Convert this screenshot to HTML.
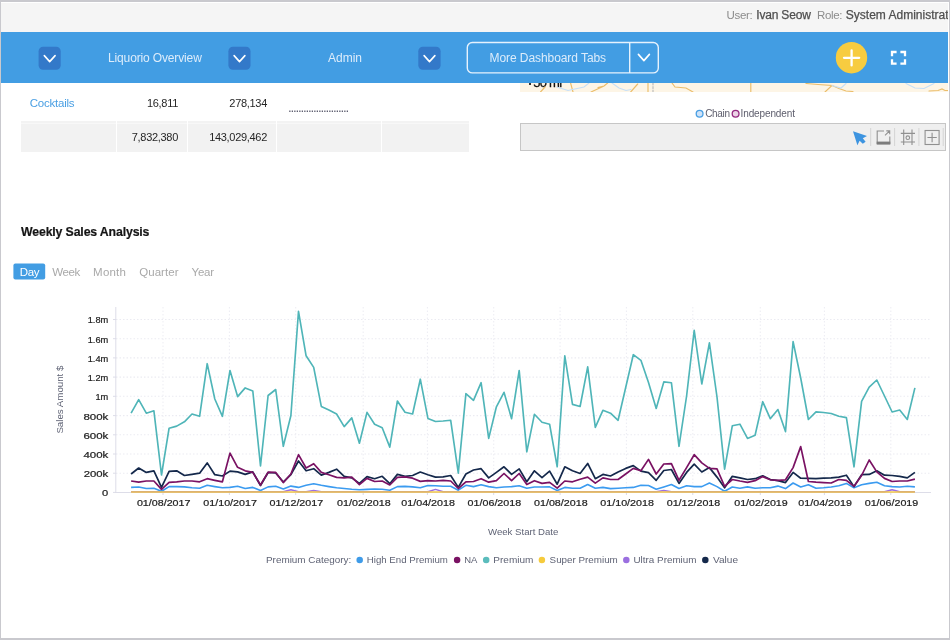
<!DOCTYPE html>
<html>
<head>
<meta charset="utf-8">
<title>Dashboard</title>
<style>
*{box-sizing:border-box;margin:0;padding:0}
html,body{width:950px;height:640px;overflow:hidden;background:#fff}
body{font-family:"Liberation Sans",sans-serif;position:relative;color:#333}
.abs{position:absolute;white-space:nowrap}
#frame{position:absolute;left:0;top:0;width:950px;height:640px;border-style:solid;border-color:#c9c9ce;border-width:2px 1px 2px 1px;pointer-events:none;z-index:50}
#topstrip{position:absolute;left:1px;top:3px;width:947px;height:29px;background:#f5f5f5;overflow:hidden}
#bluebar{position:absolute;left:1px;top:32px;width:947px;height:51px;background:#429de3}
.dd{position:absolute;top:46px;width:23px;height:24px;background:#3278c9;border-radius:4px}
.dd svg,.mbtn svg{position:absolute;left:0;top:0}
.navt{position:absolute;white-space:nowrap;color:#dcecfb;font-size:12px;line-height:14px;top:51px}
.mbtn{position:absolute;left:467px;top:42px;width:192px;height:32px;border:1px solid #e3f0fc;border-radius:5px}
.num{position:absolute;white-space:nowrap;font-size:11px;letter-spacing:-0.3px;line-height:14px;color:#262626;text-align:right}
.tab{position:absolute;white-space:nowrap;font-size:11.5px;line-height:14px;top:264.8px;color:#a9a9a9}
.ut{top:5px;font-size:12px;line-height:14px}
.cell{position:absolute;top:121px;height:31px;background:linear-gradient(#f3f3f3 0,#f3f3f3 2px,#f8f8f8 2px,#f8f8f8 3px,#f2f2f2 3px)}
</style>
</head>
<body>
<div id="wrap" style="position:absolute;left:0;top:0;width:950px;height:640px;will-change:transform">
<div id="topstrip">
  <div class="abs ut" id="u1" style="left:725.5px;color:#8c8c8c;font-size:11.5px;letter-spacing:-0.3px">User:</div>
  <div class="abs ut" id="u2" style="left:755.3px;color:#4f4f4f;letter-spacing:-0.19px;-webkit-text-stroke:0.25px #4f4f4f">Ivan Seow</div>
  <div class="abs ut" id="u3" style="left:816.1px;color:#8c8c8c;font-size:11.5px;letter-spacing:-0.35px">Role:</div>
  <div class="abs ut" id="u4" style="left:844.8px;color:#4f4f4f;-webkit-text-stroke:0.25px #4f4f4f">System Administrator</div>
</div>
<div id="bluebar"></div>

<!-- nav -->
<svg class="abs" style="left:0;top:32px" width="950" height="51" viewBox="0 32 950 51">
  <g fill="#3379c9">
    <rect x="38.6" y="46.7" width="22.1" height="23.1" rx="4.5"/>
    <rect x="228.4" y="46.7" width="22.1" height="23.1" rx="4.5"/>
    <rect x="418.3" y="46.7" width="22.3" height="23.1" rx="4.5"/>
  </g>
  <g fill="none" stroke="#fff" stroke-width="1.6" stroke-linecap="round" stroke-linejoin="round">
    <path d="M44.3 55.6 L49.7 61.6 L55.1 55.6"/>
    <path d="M234.1 55.6 L239.5 61.6 L244.9 55.6"/>
    <path d="M424.1 55.6 L429.5 61.6 L434.9 55.6"/>
    <path d="M638.4 54.4 L643.9 60.6 L649.4 54.4"/>
  </g>
  <rect x="467.3" y="42.5" width="191" height="30.4" rx="5" fill="none" stroke="#e6f2fd" stroke-width="1.4"/>
  <line x1="629.7" y1="42.5" x2="629.7" y2="72.9" stroke="#e6f2fd" stroke-width="1.4"/>
  <circle cx="851.5" cy="57.7" r="15.7" fill="#f7cc40"/>
  <path d="M844 57.8 H859.2 M851.6 50.3 V65.4" stroke="#fff" stroke-width="2.3" stroke-linecap="round" fill="none"/>
  <path d="M892 56.3 V52 H896.6 M900.4 52 H905 V56.3 M905 59.3 V63.6 H900.4 M896.6 63.6 H892 V59.3" fill="none" stroke="#fff" stroke-width="2.3"/>
</svg>
<div class="navt" id="t1" style="left:108px;letter-spacing:-0.14px">Liquorio Overview</div>
<div class="navt" id="t2" style="left:328px">Admin</div>
<div class="navt" id="t3" style="left:489.5px;letter-spacing:-0.07px">More Dashboard Tabs</div>

<!-- table -->
<div class="abs" id="ck" style="left:29.7px;top:96px;font-size:11.5px;letter-spacing:-0.22px;line-height:14px;color:#4a9fe3">Cocktails</div>
<div class="num" id="n1" style="left:100px;width:78px;top:96px">16,811</div>
<div class="num" id="n2" style="left:180px;width:87px;top:96px">278,134</div>
<svg class="abs" style="left:288px;top:108px" width="64" height="6" viewBox="288 108 64 6"><line x1="289.2" y1="111.2" x2="349" y2="111.2" stroke="#5f5f70" stroke-width="1.6" stroke-dasharray="1.3 1.2"/></svg>
<div class="cell" style="left:21px;width:95px"></div>
<div class="cell" style="left:117px;width:70px"></div>
<div class="cell" style="left:188px;width:88px"></div>
<div class="cell" style="left:277px;width:104px"></div>
<div class="cell" style="left:382px;width:87px"></div>
<div class="num" id="n3" style="left:100px;width:78px;top:130px">7,832,380</div>
<div class="num" id="n4" style="left:180px;width:87px;top:130px">143,029,462</div>

<!-- map strip + toolbar -->
<div class="abs" style="left:520px;top:83px;width:428px;height:9px;background:#fdf5e6;overflow:hidden">
  <div class="abs" style="left:13.3px;top:-6.6px;font-size:13px;line-height:14px;color:#111;-webkit-text-stroke:0.3px #111;letter-spacing:-0.75px">50 mi</div><div class="abs" style="left:8.5px;top:0;width:2px;height:1.5px;background:#333"></div>
  <svg class="abs" style="left:0;top:0" width="428" height="9" viewBox="520 83 428 9" fill="none" stroke-width="1.15" stroke-linecap="round">
    <g stroke="#ebbd6a">
      <path d="M540.5 92 L545 87 M570.6 83 L573 92 M591 92 L604 86 L607.6 83 M604 86 L598 87.5 M630.7 92 L637.7 84 M648 83 V92 M672 83 L675 87 L686 88 L693 92"/>
      <path d="M750.8 83 V92 M806 83.5 L818 84.5 L832 85.5 L825 92 M832 85.5 L839 88.5 L846 91 L853 91.5 M929 91 L938 90.5 L942 89 L945 90.5 L949 90.5"/>
    </g>
    <g stroke="#c6dff6">
      <path d="M556.7 87 L568 90.5 L584 87 L589 83 M612 83 L619 88 L626 90.5 L631 89.5"/>
      <path d="M846 83.5 L841 88 L832 85.5 M906 83.5 L915 88 L924 88.5 L934 83.5"/>
    </g>
    <path d="M653 83 V92" stroke="#bbb" stroke-dasharray="2 1.5"/>
  </svg>
</div>
<svg class="abs" style="left:690px;top:106px" width="120" height="16" viewBox="690 106 120 16">
  <circle cx="699.6" cy="113.8" r="3.4" fill="#cfe3f8" stroke="#4a9fe3" stroke-width="1.3"/>
  <circle cx="735.6" cy="113.8" r="3.4" fill="#ecd3e6" stroke="#952a80" stroke-width="1.3"/>
</svg>
<div class="abs" id="lg1" style="left:705.2px;top:106.5px;font-size:10px;line-height:14px;color:#5d5d6c;letter-spacing:-0.33px">Chain</div>
<div class="abs" id="lg2" style="left:740.6px;top:106.5px;font-size:10px;line-height:14px;color:#5d5d6c;letter-spacing:-0.13px">Independent</div>
<div class="abs" style="left:520px;top:123px;width:426px;height:28px;background:#efefef;border:1px solid #c6c6c6"></div>
<svg class="abs" style="left:845px;top:124px" width="100" height="26" viewBox="845 124 100 26" fill="none">
  <path d="M853 131.3 L867 136 L862.8 138.3 L865.6 141.8 L862.8 143.8 L859.6 140.8 L857.4 145.2 Z" fill="#3d94e0"/>
  <g stroke="#d4d4d4" stroke-width="1"><path d="M870.7 128 V146 M894.6 128 V146 M918.9 128 V146 M943.2 128 V146"/></g>
  <g stroke="#909090" stroke-width="1.1">
    <path d="M884 131 H877.2 V144 M889.8 136.5 V144"/>
    <path d="M885 135.4 L889.6 130.9 M886.3 130.9 H889.7 V134.3"/>
    <path d="M903.7 129.6 V145 M912 129.6 V145 M900.8 133.4 H915 M900.8 142 H915"/>
    <circle cx="907.8" cy="137.7" r="1.8"/>
    <rect x="925.1" y="130.5" width="14" height="14"/>
    <path d="M927.4 137.5 H936.8 M932.1 132.8 V142.2"/>
  </g>
  <rect x="876.7" y="141.6" width="13.6" height="3" fill="#7c7c7c"/>
</svg>

<!-- title & tabs -->
<div class="abs" id="title" style="left:21px;top:224.5px;font-size:12.3px;letter-spacing:-0.14px;line-height:15px;font-weight:bold;color:#151515;-webkit-text-stroke:0.2px #151515">Weekly Sales Analysis</div>
<svg class="abs" style="left:12px;top:262px" width="36" height="20" viewBox="12 262 36 20"><rect x="13.4" y="263.4" width="31.8" height="16.1" rx="2" fill="#429de3"/></svg>
<div class="tab" id="tb0" style="left:19.8px;color:#fff;letter-spacing:-0.35px">Day</div>
<div class="tab" id="tb1" style="left:52.2px;letter-spacing:-0.35px">Week</div>
<div class="tab" id="tb2" style="left:93.1px;letter-spacing:0.22px">Month</div>
<div class="tab" id="tb3" style="left:139.3px;letter-spacing:0.03px">Quarter</div>
<div class="tab" id="tb4" style="left:191.5px;letter-spacing:-0.2px">Year</div>

<!-- chart -->
<svg id="chart" class="abs" style="left:0;top:290px;font-family:'Liberation Sans',sans-serif" width="950" height="300" viewBox="0 290 950 300">
<!--CHART-START-->
<line x1="116" y1="473.2" x2="929.5" y2="473.2" stroke="#ebebf2" stroke-width="1.1" stroke-dasharray="1.5 2"/>
<line x1="116" y1="454.0" x2="929.5" y2="454.0" stroke="#ebebf2" stroke-width="1.1" stroke-dasharray="1.5 2"/>
<line x1="116" y1="434.8" x2="929.5" y2="434.8" stroke="#ebebf2" stroke-width="1.1" stroke-dasharray="1.5 2"/>
<line x1="116" y1="415.6" x2="929.5" y2="415.6" stroke="#ebebf2" stroke-width="1.1" stroke-dasharray="1.5 2"/>
<line x1="116" y1="396.3" x2="929.5" y2="396.3" stroke="#ebebf2" stroke-width="1.1" stroke-dasharray="1.5 2"/>
<line x1="116" y1="377.1" x2="929.5" y2="377.1" stroke="#ebebf2" stroke-width="1.1" stroke-dasharray="1.5 2"/>
<line x1="116" y1="357.9" x2="929.5" y2="357.9" stroke="#ebebf2" stroke-width="1.1" stroke-dasharray="1.5 2"/>
<line x1="116" y1="338.7" x2="929.5" y2="338.7" stroke="#ebebf2" stroke-width="1.1" stroke-dasharray="1.5 2"/>
<line x1="116" y1="319.5" x2="929.5" y2="319.5" stroke="#ebebf2" stroke-width="1.1" stroke-dasharray="1.5 2"/>
<line x1="163.0" y1="307" x2="163.0" y2="492" stroke="#eeeef4" stroke-width="1.1" stroke-dasharray="1.5 2"/>
<line x1="163.0" y1="492" x2="163.0" y2="495" stroke="#d9d9e6" stroke-width="1"/>
<line x1="229.4" y1="307" x2="229.4" y2="492" stroke="#eeeef4" stroke-width="1.1" stroke-dasharray="1.5 2"/>
<line x1="229.4" y1="492" x2="229.4" y2="495" stroke="#d9d9e6" stroke-width="1"/>
<line x1="295.7" y1="307" x2="295.7" y2="492" stroke="#eeeef4" stroke-width="1.1" stroke-dasharray="1.5 2"/>
<line x1="295.7" y1="492" x2="295.7" y2="495" stroke="#d9d9e6" stroke-width="1"/>
<line x1="363.2" y1="307" x2="363.2" y2="492" stroke="#eeeef4" stroke-width="1.1" stroke-dasharray="1.5 2"/>
<line x1="363.2" y1="492" x2="363.2" y2="495" stroke="#d9d9e6" stroke-width="1"/>
<line x1="427.4" y1="307" x2="427.4" y2="492" stroke="#eeeef4" stroke-width="1.1" stroke-dasharray="1.5 2"/>
<line x1="427.4" y1="492" x2="427.4" y2="495" stroke="#d9d9e6" stroke-width="1"/>
<line x1="493.7" y1="307" x2="493.7" y2="492" stroke="#eeeef4" stroke-width="1.1" stroke-dasharray="1.5 2"/>
<line x1="493.7" y1="492" x2="493.7" y2="495" stroke="#d9d9e6" stroke-width="1"/>
<line x1="560.1" y1="307" x2="560.1" y2="492" stroke="#eeeef4" stroke-width="1.1" stroke-dasharray="1.5 2"/>
<line x1="560.1" y1="492" x2="560.1" y2="495" stroke="#d9d9e6" stroke-width="1"/>
<line x1="626.4" y1="307" x2="626.4" y2="492" stroke="#eeeef4" stroke-width="1.1" stroke-dasharray="1.5 2"/>
<line x1="626.4" y1="492" x2="626.4" y2="495" stroke="#d9d9e6" stroke-width="1"/>
<line x1="692.8" y1="307" x2="692.8" y2="492" stroke="#eeeef4" stroke-width="1.1" stroke-dasharray="1.5 2"/>
<line x1="692.8" y1="492" x2="692.8" y2="495" stroke="#d9d9e6" stroke-width="1"/>
<line x1="760.3" y1="307" x2="760.3" y2="492" stroke="#eeeef4" stroke-width="1.1" stroke-dasharray="1.5 2"/>
<line x1="760.3" y1="492" x2="760.3" y2="495" stroke="#d9d9e6" stroke-width="1"/>
<line x1="824.4" y1="307" x2="824.4" y2="492" stroke="#eeeef4" stroke-width="1.1" stroke-dasharray="1.5 2"/>
<line x1="824.4" y1="492" x2="824.4" y2="495" stroke="#d9d9e6" stroke-width="1"/>
<line x1="890.8" y1="307" x2="890.8" y2="492" stroke="#eeeef4" stroke-width="1.1" stroke-dasharray="1.5 2"/>
<line x1="890.8" y1="492" x2="890.8" y2="495" stroke="#d9d9e6" stroke-width="1"/>
<line x1="115.8" y1="307" x2="115.8" y2="493" stroke="#dddde8" stroke-width="1"/>
<line x1="115.2" y1="492.5" x2="931" y2="492.5" stroke="#dddde8" stroke-width="1"/>
<line x1="113" y1="492.4" x2="116" y2="492.4" stroke="#dddde8" stroke-width="1"/>
<line x1="113" y1="473.2" x2="116" y2="473.2" stroke="#dddde8" stroke-width="1"/>
<line x1="113" y1="454.0" x2="116" y2="454.0" stroke="#dddde8" stroke-width="1"/>
<line x1="113" y1="434.8" x2="116" y2="434.8" stroke="#dddde8" stroke-width="1"/>
<line x1="113" y1="415.6" x2="116" y2="415.6" stroke="#dddde8" stroke-width="1"/>
<line x1="113" y1="396.3" x2="116" y2="396.3" stroke="#dddde8" stroke-width="1"/>
<line x1="113" y1="377.1" x2="116" y2="377.1" stroke="#dddde8" stroke-width="1"/>
<line x1="113" y1="357.9" x2="116" y2="357.9" stroke="#dddde8" stroke-width="1"/>
<line x1="113" y1="338.7" x2="116" y2="338.7" stroke="#dddde8" stroke-width="1"/>
<line x1="113" y1="319.5" x2="116" y2="319.5" stroke="#dddde8" stroke-width="1"/>
<text x="108.3" y="496.3" text-anchor="end" textLength="6.2" lengthAdjust="spacingAndGlyphs" font-size="9.6" fill="#222" stroke="#222" stroke-width="0.22">0</text>
<text x="108.3" y="477.1" text-anchor="end" textLength="24.6" lengthAdjust="spacingAndGlyphs" font-size="9.6" fill="#222" stroke="#222" stroke-width="0.22">200k</text>
<text x="108.3" y="457.9" text-anchor="end" textLength="24.9" lengthAdjust="spacingAndGlyphs" font-size="9.6" fill="#222" stroke="#222" stroke-width="0.22">400k</text>
<text x="108.3" y="438.7" text-anchor="end" textLength="24.9" lengthAdjust="spacingAndGlyphs" font-size="9.6" fill="#222" stroke="#222" stroke-width="0.22">600k</text>
<text x="108.3" y="419.5" text-anchor="end" textLength="24.9" lengthAdjust="spacingAndGlyphs" font-size="9.6" fill="#222" stroke="#222" stroke-width="0.22">800k</text>
<text x="108.3" y="400.2" text-anchor="end" textLength="12.8" lengthAdjust="spacingAndGlyphs" font-size="9.6" fill="#222" stroke="#222" stroke-width="0.22">1m</text>
<text x="108.3" y="381.0" text-anchor="end" textLength="20.6" lengthAdjust="spacingAndGlyphs" font-size="9.6" fill="#222" stroke="#222" stroke-width="0.22">1.2m</text>
<text x="108.3" y="361.8" text-anchor="end" textLength="20.6" lengthAdjust="spacingAndGlyphs" font-size="9.6" fill="#222" stroke="#222" stroke-width="0.22">1.4m</text>
<text x="108.3" y="342.6" text-anchor="end" textLength="20.6" lengthAdjust="spacingAndGlyphs" font-size="9.6" fill="#222" stroke="#222" stroke-width="0.22">1.6m</text>
<text x="108.3" y="323.4" text-anchor="end" textLength="20.6" lengthAdjust="spacingAndGlyphs" font-size="9.6" fill="#222" stroke="#222" stroke-width="0.22">1.8m</text>
<text x="163.7" y="506.1" text-anchor="middle" textLength="53.6" lengthAdjust="spacingAndGlyphs" font-size="9.5" fill="#222" stroke="#222" stroke-width="0.22">01/08/2017</text>
<text x="230.1" y="506.1" text-anchor="middle" textLength="53.6" lengthAdjust="spacingAndGlyphs" font-size="9.5" fill="#222" stroke="#222" stroke-width="0.22">01/10/2017</text>
<text x="296.4" y="506.1" text-anchor="middle" textLength="53.6" lengthAdjust="spacingAndGlyphs" font-size="9.5" fill="#222" stroke="#222" stroke-width="0.22">01/12/2017</text>
<text x="363.9" y="506.1" text-anchor="middle" textLength="53.6" lengthAdjust="spacingAndGlyphs" font-size="9.5" fill="#222" stroke="#222" stroke-width="0.22">01/02/2018</text>
<text x="428.1" y="506.1" text-anchor="middle" textLength="53.6" lengthAdjust="spacingAndGlyphs" font-size="9.5" fill="#222" stroke="#222" stroke-width="0.22">01/04/2018</text>
<text x="494.4" y="506.1" text-anchor="middle" textLength="53.6" lengthAdjust="spacingAndGlyphs" font-size="9.5" fill="#222" stroke="#222" stroke-width="0.22">01/06/2018</text>
<text x="560.8" y="506.1" text-anchor="middle" textLength="53.6" lengthAdjust="spacingAndGlyphs" font-size="9.5" fill="#222" stroke="#222" stroke-width="0.22">01/08/2018</text>
<text x="627.1" y="506.1" text-anchor="middle" textLength="53.6" lengthAdjust="spacingAndGlyphs" font-size="9.5" fill="#222" stroke="#222" stroke-width="0.22">01/10/2018</text>
<text x="693.5" y="506.1" text-anchor="middle" textLength="53.6" lengthAdjust="spacingAndGlyphs" font-size="9.5" fill="#222" stroke="#222" stroke-width="0.22">01/12/2018</text>
<text x="761.0" y="506.1" text-anchor="middle" textLength="53.6" lengthAdjust="spacingAndGlyphs" font-size="9.5" fill="#222" stroke="#222" stroke-width="0.22">01/02/2019</text>
<text x="825.1" y="506.1" text-anchor="middle" textLength="53.6" lengthAdjust="spacingAndGlyphs" font-size="9.5" fill="#222" stroke="#222" stroke-width="0.22">01/04/2019</text>
<text x="891.5" y="506.1" text-anchor="middle" textLength="53.6" lengthAdjust="spacingAndGlyphs" font-size="9.5" fill="#222" stroke="#222" stroke-width="0.22">01/06/2019</text>
<text x="523.2" y="534.6" text-anchor="middle" textLength="70.4" lengthAdjust="spacingAndGlyphs" font-size="9.5" fill="#5f6375">Week Start Date</text>
<text transform="translate(62.6 399.6) rotate(-90)" text-anchor="middle" textLength="68" lengthAdjust="spacingAndGlyphs" font-size="9.5" fill="#5f6375">Sales Amount $</text>
<path d="M131.1 491.8 L138.7 491.8 L146.3 491.8 L153.9 491.8 L161.5 491.8 L169.1 491.8 L176.7 491.8 L184.4 491.8 L192.0 491.8 L199.6 491.8 L207.2 491.8 L214.8 491.8 L222.4 491.8 L230.0 491.8 L237.6 491.8 L245.2 491.8 L252.8 491.8 L260.5 491.8 L268.1 491.8 L275.7 491.8 L283.3 491.8 L290.9 489.7 L298.5 491.8 L306.1 491.8 L313.7 490.5 L321.3 491.8 L328.9 491.8 L336.6 491.8 L344.2 491.8 L351.8 491.8 L359.4 491.8 L367.0 491.8 L374.6 491.8 L382.2 491.8 L389.8 491.8 L397.4 491.8 L405.0 491.8 L412.6 491.8 L420.3 491.8 L427.9 491.8 L435.5 489.4 L443.1 491.8 L450.7 491.8 L458.3 491.8 L465.9 491.8 L473.5 491.8 L481.1 491.8 L488.7 491.8 L496.4 491.8 L504.0 491.8 L511.6 491.8 L519.2 491.8 L526.8 491.8 L534.4 491.8 L542.0 491.8 L549.6 491.8 L557.2 491.8 L564.8 491.8 L572.5 491.8 L580.1 491.8 L587.7 491.8 L595.3 491.8 L602.9 491.8 L610.5 491.8 L618.1 491.8 L625.7 491.8 L633.3 491.8 L640.9 491.8 L648.5 491.8 L656.2 491.8 L663.8 490.6 L671.4 491.8 L679.0 491.8 L686.6 491.8 L694.2 491.8 L701.8 491.8 L709.4 491.8 L717.0 491.8 L724.6 491.8 L732.3 491.8 L739.9 491.8 L747.5 491.8 L755.1 491.8 L762.7 491.8 L770.3 491.8 L777.9 491.8 L785.5 491.8 L793.1 491.8 L800.7 491.8 L808.4 491.8 L816.0 491.8 L823.6 491.8 L831.2 491.8 L838.8 491.8 L846.4 491.8 L854.0 491.8 L861.6 491.8 L869.2 491.8 L876.8 491.8 L884.5 491.8 L892.1 489.7 L899.7 491.8 L907.3 491.8 L914.9 491.8" fill="none" stroke="#9b6fe0" stroke-width="1.5" stroke-linejoin="round"/>
<path d="M131.1 487.4 L138.7 487.0 L146.3 488.5 L153.9 488.2 L161.5 491.3 L169.1 486.6 L176.7 486.6 L184.4 486.9 L192.0 487.8 L199.6 488.2 L207.2 485.3 L214.8 486.6 L222.4 487.8 L230.0 487.4 L237.6 486.3 L245.2 488.5 L252.8 487.4 L260.5 490.5 L268.1 486.9 L275.7 486.3 L283.3 489.0 L290.9 486.1 L298.5 487.4 L306.1 485.3 L313.7 483.7 L321.3 485.3 L328.9 486.6 L336.6 487.8 L344.2 488.5 L351.8 489.3 L359.4 489.7 L367.0 489.4 L374.6 489.0 L382.2 489.3 L389.8 490.2 L397.4 486.6 L405.0 486.4 L412.6 486.9 L420.3 487.8 L427.9 485.5 L435.5 485.8 L443.1 486.3 L450.7 486.3 L458.3 490.2 L465.9 485.3 L473.5 486.6 L481.1 484.7 L488.7 486.6 L496.4 487.8 L504.0 487.0 L511.6 486.6 L519.2 485.8 L526.8 488.2 L534.4 487.0 L542.0 487.0 L549.6 486.9 L557.2 490.5 L564.8 487.4 L572.5 488.2 L580.1 488.2 L587.7 484.5 L595.3 488.2 L602.9 487.4 L610.5 488.6 L618.1 488.2 L625.7 487.8 L633.3 487.4 L640.9 485.3 L648.5 485.5 L656.2 489.3 L663.8 486.9 L671.4 484.5 L679.0 488.5 L686.6 485.8 L694.2 486.6 L701.8 486.6 L709.4 483.0 L717.0 486.6 L724.6 491.3 L732.3 487.0 L739.9 488.2 L747.5 486.9 L755.1 488.2 L762.7 487.8 L770.3 487.8 L777.9 486.1 L785.5 488.6 L793.1 483.0 L800.7 487.0 L808.4 484.7 L816.0 488.2 L823.6 487.7 L831.2 487.0 L838.8 485.8 L846.4 483.4 L854.0 487.8 L861.6 484.7 L869.2 483.4 L876.8 482.2 L884.5 485.8 L892.1 486.6 L899.7 487.0 L907.3 486.3 L914.9 486.9" fill="none" stroke="#3b9bf0" stroke-width="1.6" stroke-linejoin="round"/>
<path d="M131.1 492.0 L138.7 492.0 L146.3 492.0 L153.9 492.0 L161.5 492.0 L169.1 492.0 L176.7 492.0 L184.4 492.0 L192.0 492.0 L199.6 492.0 L207.2 492.0 L214.8 492.0 L222.4 492.0 L230.0 492.0 L237.6 492.0 L245.2 492.0 L252.8 492.0 L260.5 492.0 L268.1 492.0 L275.7 492.0 L283.3 492.0 L290.9 492.0 L298.5 492.0 L306.1 492.0 L313.7 492.0 L321.3 492.0 L328.9 492.0 L336.6 492.0 L344.2 492.0 L351.8 492.0 L359.4 492.0 L367.0 492.0 L374.6 492.0 L382.2 492.0 L389.8 492.0 L397.4 492.0 L405.0 492.0 L412.6 492.0 L420.3 492.0 L427.9 492.0 L435.5 492.0 L443.1 492.0 L450.7 492.0 L458.3 492.0 L465.9 492.0 L473.5 492.0 L481.1 492.0 L488.7 492.0 L496.4 492.0 L504.0 492.0 L511.6 492.0 L519.2 492.0 L526.8 492.0 L534.4 492.0 L542.0 492.0 L549.6 492.0 L557.2 492.0 L564.8 492.0 L572.5 492.0 L580.1 492.0 L587.7 492.0 L595.3 492.0 L602.9 492.0 L610.5 492.0 L618.1 492.0 L625.7 492.0 L633.3 492.0 L640.9 492.0 L648.5 492.0 L656.2 492.0 L663.8 492.0 L671.4 492.0 L679.0 492.0 L686.6 492.0 L694.2 492.0 L701.8 492.0 L709.4 492.0 L717.0 492.0 L724.6 492.0 L732.3 492.0 L739.9 492.0 L747.5 492.0 L755.1 492.0 L762.7 492.0 L770.3 492.0 L777.9 492.0 L785.5 492.0 L793.1 492.0 L800.7 492.0 L808.4 492.0 L816.0 492.0 L823.6 492.0 L831.2 492.0 L838.8 492.0 L846.4 492.0 L854.0 492.0 L861.6 492.0 L869.2 492.0 L876.8 492.0 L884.5 492.0 L892.1 492.0 L899.7 492.0 L907.3 492.0 L914.9 492.0" fill="none" stroke="#f3c84a" stroke-width="1.45" stroke-linejoin="round"/>
<path d="M131.1 413.2 L138.7 399.7 L146.3 413.2 L153.9 410.8 L161.5 475.0 L169.1 428.2 L176.7 426.1 L184.4 421.8 L192.0 414.0 L199.6 416.3 L207.2 363.7 L214.8 399.0 L222.4 416.3 L230.0 370.5 L237.6 396.6 L245.2 387.9 L252.8 391.0 L260.5 466.0 L268.1 395.5 L275.7 389.5 L283.3 446.3 L290.9 415.5 L298.5 311.3 L306.1 355.8 L313.7 367.4 L321.3 406.4 L328.9 410.0 L336.6 414.0 L344.2 426.6 L351.8 417.9 L359.4 443.2 L367.0 412.4 L374.6 424.2 L382.2 427.7 L389.8 447.1 L397.4 401.0 L405.0 412.2 L412.6 414.0 L420.3 379.2 L427.9 418.4 L435.5 421.5 L443.1 421.0 L450.7 420.3 L458.3 473.2 L465.9 393.7 L473.5 400.3 L481.1 382.7 L488.7 438.4 L496.4 406.8 L504.0 392.3 L511.6 418.7 L519.2 370.5 L526.8 451.8 L534.4 414.3 L542.0 422.2 L549.6 424.2 L557.2 466.8 L564.8 355.8 L572.5 404.4 L580.1 406.5 L587.7 366.9 L595.3 427.4 L602.9 410.3 L610.5 413.2 L618.1 420.3 L625.7 387.5 L633.3 354.7 L640.9 360.3 L648.5 382.4 L656.2 408.4 L663.8 381.9 L671.4 382.7 L679.0 446.3 L686.6 396.0 L694.2 330.3 L701.8 384.0 L709.4 342.9 L717.0 397.0 L724.6 469.2 L732.3 425.8 L739.9 424.2 L747.5 438.4 L755.1 435.3 L762.7 401.7 L770.3 418.7 L777.9 409.5 L785.5 431.6 L793.1 341.6 L800.7 378.0 L808.4 419.5 L816.0 411.9 L823.6 412.5 L831.2 413.5 L838.8 416.3 L846.4 417.6 L854.0 466.8 L861.6 401.3 L869.2 387.1 L876.8 380.0 L884.5 396.0 L892.1 412.0 L899.7 410.0 L907.3 419.5 L914.9 387.9" fill="none" stroke="#4fb5b8" stroke-width="1.65" stroke-linejoin="round"/>
<path d="M131.1 474.0 L138.7 468.0 L146.3 472.4 L153.9 470.8 L161.5 487.4 L169.1 471.3 L176.7 470.8 L184.4 475.5 L192.0 474.3 L199.6 473.2 L207.2 462.9 L214.8 474.7 L222.4 476.0 L230.0 471.1 L237.6 471.9 L245.2 474.4 L252.8 471.9 L260.5 485.5 L268.1 472.5 L275.7 473.0 L283.3 482.0 L290.9 474.7 L298.5 461.0 L306.1 470.8 L313.7 468.7 L321.3 475.2 L328.9 472.4 L336.6 469.2 L344.2 476.3 L351.8 477.9 L359.4 483.4 L367.0 476.6 L374.6 478.7 L382.2 476.3 L389.8 483.7 L397.4 474.4 L405.0 476.3 L412.6 475.5 L420.3 472.0 L427.9 474.7 L435.5 477.1 L443.1 476.8 L450.7 475.5 L458.3 487.4 L465.9 474.0 L473.5 470.0 L481.1 468.7 L488.7 477.9 L496.4 472.4 L504.0 466.8 L511.6 474.4 L519.2 468.9 L526.8 481.8 L534.4 470.8 L542.0 477.6 L549.6 471.1 L557.2 484.2 L564.8 466.8 L572.5 470.8 L580.1 473.5 L587.7 463.4 L595.3 478.7 L602.9 474.4 L610.5 476.0 L618.1 471.9 L625.7 468.4 L633.3 465.6 L640.9 471.1 L648.5 472.7 L656.2 480.3 L663.8 470.5 L671.4 469.5 L679.0 483.4 L686.6 472.4 L694.2 464.2 L701.8 472.0 L709.4 467.6 L717.0 477.1 L724.6 487.8 L732.3 476.3 L739.9 477.9 L747.5 479.5 L755.1 478.7 L762.7 475.8 L770.3 479.5 L777.9 480.6 L785.5 482.6 L793.1 472.4 L800.7 478.2 L808.4 478.4 L816.0 478.7 L823.6 478.2 L831.2 477.9 L838.8 477.1 L846.4 475.2 L854.0 486.6 L861.6 474.7 L869.2 474.4 L876.8 470.8 L884.5 475.2 L892.1 475.5 L899.7 476.3 L907.3 477.9 L914.9 472.4" fill="none" stroke="#14284b" stroke-width="1.7" stroke-linejoin="round"/>
<path d="M131.1 481.0 L138.7 482.2 L146.3 481.0 L153.9 481.0 L161.5 489.4 L169.1 482.3 L176.7 481.8 L184.4 481.0 L192.0 481.0 L199.6 481.8 L207.2 478.7 L214.8 480.3 L222.4 481.8 L230.0 453.1 L237.6 467.3 L245.2 470.8 L252.8 472.4 L260.5 485.0 L268.1 472.2 L275.7 472.4 L283.3 482.6 L290.9 474.0 L298.5 454.7 L306.1 468.0 L313.7 463.7 L321.3 472.4 L328.9 474.7 L336.6 477.4 L344.2 477.9 L351.8 477.1 L359.4 484.7 L367.0 478.4 L374.6 481.5 L382.2 481.0 L389.8 485.0 L397.4 477.4 L405.0 476.8 L412.6 478.2 L420.3 481.4 L427.9 480.7 L435.5 481.0 L443.1 480.3 L450.7 481.0 L458.3 488.5 L465.9 481.8 L473.5 481.5 L481.1 478.7 L488.7 482.2 L496.4 480.6 L504.0 473.5 L511.6 480.7 L519.2 473.5 L526.8 484.5 L534.4 480.7 L542.0 483.4 L549.6 482.3 L557.2 488.2 L564.8 481.0 L572.5 481.8 L580.1 479.2 L587.7 477.1 L595.3 483.1 L602.9 477.9 L610.5 479.5 L618.1 479.5 L625.7 474.0 L633.3 468.4 L640.9 470.8 L648.5 459.4 L656.2 474.0 L663.8 464.0 L671.4 463.7 L679.0 480.3 L686.6 467.6 L694.2 454.7 L701.8 462.9 L709.4 468.4 L717.0 468.9 L724.6 486.3 L732.3 479.5 L739.9 481.0 L747.5 482.3 L755.1 480.7 L762.7 476.6 L770.3 479.8 L777.9 480.3 L785.5 479.8 L793.1 467.6 L800.7 446.6 L808.4 481.5 L816.0 482.2 L823.6 482.6 L831.2 483.0 L838.8 479.5 L846.4 480.3 L854.0 486.3 L861.6 475.5 L869.2 460.0 L876.8 471.9 L884.5 478.4 L892.1 481.5 L899.7 481.0 L907.3 481.0 L914.9 479.2" fill="none" stroke="#7a1263" stroke-width="1.7" stroke-linejoin="round"/>
<text x="266" y="563.4" textLength="85.3" lengthAdjust="spacingAndGlyphs" font-size="9.6" fill="#5f6375">Premium Category:</text>
<circle cx="359.7" cy="560" r="3.25" fill="#3f9be8"/>
<text x="366.8" y="563.4" textLength="81.1" lengthAdjust="spacingAndGlyphs" font-size="9.6" fill="#5f6375">High End Premium</text>
<circle cx="457.1" cy="560" r="3.25" fill="#7a1263"/>
<text x="464.2" y="563.4" textLength="13.2" lengthAdjust="spacingAndGlyphs" font-size="9.6" fill="#5f6375">NA</text>
<circle cx="486.2" cy="560" r="3.25" fill="#5bbcbc"/>
<text x="493.3" y="563.4" textLength="40.1" lengthAdjust="spacingAndGlyphs" font-size="9.6" fill="#5f6375">Premium</text>
<circle cx="541.9" cy="560" r="3.25" fill="#f6cb3c"/>
<text x="549.6" y="563.4" textLength="68.2" lengthAdjust="spacingAndGlyphs" font-size="9.6" fill="#5f6375">Super Premium</text>
<circle cx="626.3" cy="560" r="3.25" fill="#9b6fe0"/>
<text x="633.5" y="563.4" textLength="63.0" lengthAdjust="spacingAndGlyphs" font-size="9.6" fill="#5f6375">Ultra Premium</text>
<circle cx="705.3" cy="560" r="3.25" fill="#14284b"/>
<text x="713.0" y="563.4" textLength="25.0" lengthAdjust="spacingAndGlyphs" font-size="9.6" fill="#5f6375">Value</text>
<!--CHART-END-->
</svg>

<div id="frame"></div>
</div>
</body>
</html>
